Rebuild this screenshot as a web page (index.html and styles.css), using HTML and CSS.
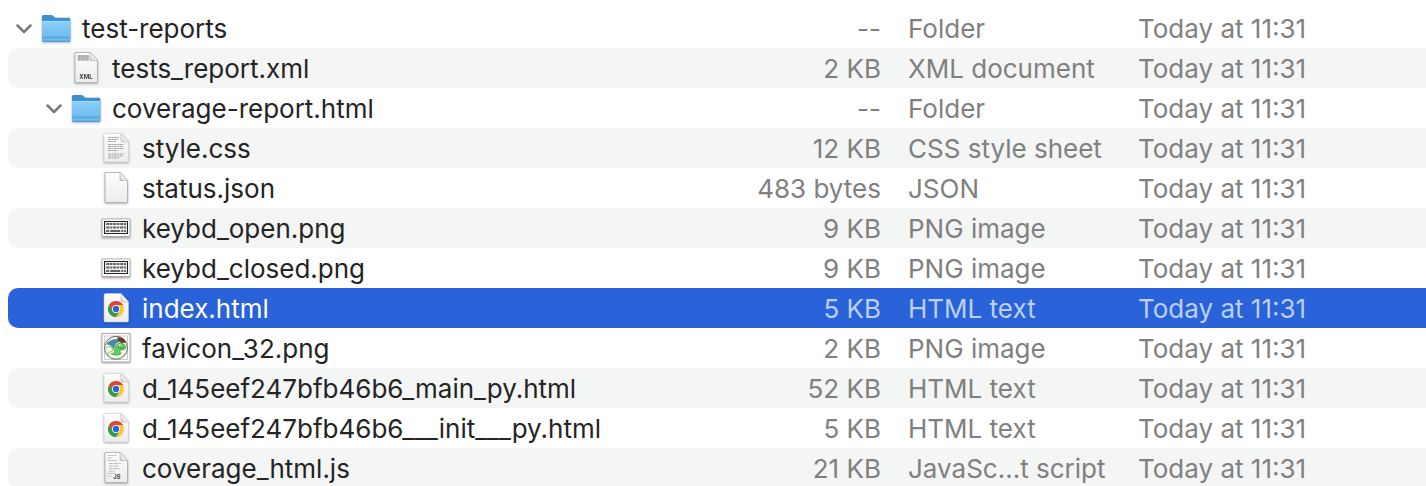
FILE: index.html
```html
<!DOCTYPE html>
<html lang="en">
<head>
<meta charset="utf-8">
<title>test-reports</title>
<link rel="stylesheet" href="styles.css">
</head>
<body>
<svg class="defs" aria-hidden="true">
  <defs>
    <linearGradient id="paper" x1="0" y1="0" x2="0" y2="1"><stop offset="0" stop-color="#fdfdfd"/><stop offset="1" stop-color="#ececec"/></linearGradient>
    <linearGradient id="fold" x1="0" y1="1" x2="1" y2="0"><stop offset="0" stop-color="#c4c4c4"/><stop offset=".5" stop-color="#fff"/></linearGradient>
    <linearGradient id="blue" x1="0" y1="0" x2="0" y2="1"><stop offset="0" stop-color="#8bd0fb"/><stop offset="1" stop-color="#66b5ea"/></linearGradient>
    <symbol id="folder" viewBox="0 0 30 36">
      <path d="M1 31V6.500q0-1.500 1.500-1.500H10q1.200 0 2 .8l1.600 1.400q.6.600 1.600.600H28q1.300 0 1.300 1.400V31z" fill="#3f8fcb"/>
      <path d="M1 11h28.300v19.600q0 1.200-1.200 1.200H2.200Q1 31.800 1 30.600z" fill="url(#blue)"/>
      <path d="M2 11.400h26.500" stroke="#a9dcfb" stroke-width=".8"/>
      <path d="M1.300 27.300h27.700M1.300 31.300h27.700" stroke="#4795cf" stroke-width=".9"/>
    </symbol>
    <symbol id="page" viewBox="0 0 30 36">
      <path d="M4 2.500h15l7.500 8V32.500H4z" fill="url(#paper)" stroke="#b0b0b0" stroke-width=".9"/>
      <path d="M19 2.500l7.500 8H19z" fill="url(#fold)" stroke="#aaa" stroke-width=".6"/>
    </symbol>
    <symbol id="sheet" viewBox="0 0 30 36">
      <path d="M4.500 3.500H20l7.500 8.500v18.500q0 1.500-1.500 1.500H4.500Q3 32 3 30.500V5q0-1.500 1.500-1.500z" fill="url(#paper)" stroke="#d0d0d0" stroke-width=".6"/>
      <path d="M20 3.500l7.500 8.500H21.500Q20 12 20 10.500z" fill="url(#fold)" stroke="#b5b5b5" stroke-width=".6"/>
    </symbol>
    <symbol id="xml" viewBox="0 0 30 36">
      <use href="#page"/>
      <path d="M6.500 5h11.500v5.500H6.500z" fill="#c2c2c2"/>
      <path d="M7 6h11M7 8h11M7 10h11" stroke="#989898" stroke-width=".8" stroke-dasharray="2 .6 1 .5"/>
      <text x="15" y="29" class="tag">XML</text>
    </symbol>
    <symbol id="css" viewBox="0 0 30 36">
      <use href="#sheet"/>
      <path d="M7 7.500h11M7 9.500h10M7 11.500h8M7 14.500h16M7 16.500h15M7 18.500h16M7 20.500h10M7 24h16M7 26h15M7 28h11" stroke="#aaa" stroke-width="1.200" stroke-dasharray="3 .5 2 .4"/>
    </symbol>
    <symbol id="js" viewBox="0 0 30 36">
      <use href="#page"/>
      <path d="M6.500 5.500h9M6.500 8h4M6.500 10.500h9M8 13.500h12M8 16h9M8 18.500h11M8 21h6M6.500 23.500h8M6.500 26h4" stroke="#b4b4b4" stroke-width=".9" stroke-dasharray="3 .6 2 .5"/>
      <text x="16" y="29" class="tag">JS</text>
    </symbol>
    <symbol id="keys" viewBox="0 0 30 36">
      <path d="M1 9h28v17.500H1z" fill="#fff" stroke="#999" stroke-width=".7"/>
      <path d="M1 27h28" stroke="#aaa" stroke-width="1"/>
      <path d="M3.500 11.500h23v12h-23z" fill="#f3f3f3" stroke="#222" stroke-width="1.100"/>
      <path d="M5.200 14h19.800" stroke="#666" stroke-width="1.800" stroke-dasharray="2.800 .7"/>
      <path d="M5.200 17.500h19.800" stroke="#666" stroke-width="1.800" stroke-dasharray="3.400 .7 2 .7"/>
      <path d="M5.200 21h3M9.200 21h10M20.200 21h2M23 21h2" stroke="#666" stroke-width="1.800"/>
    </symbol>
    <symbol id="chrome" viewBox="0 0 30 36">
      <use href="#sheet"/>
      <circle cx="15" cy="19" r="8" fill="#fbc832"/>
      <path d="M8.070 15A8 8 0 0 1 21.930 15H15L11.540 21z" fill="#dc4437"/>
      <path d="M8.070 15L11.540 21 15 23 18.460 21 15 27A8 8 0 0 1 8.070 15z" fill="#2f9b50"/>
      <circle cx="15" cy="19" r="4" fill="#fff"/>
      <circle cx="15" cy="19" r="3.200" fill="#2668dc"/>
    </symbol>
    <symbol id="snake" viewBox="0 0 30 36">
      <path d="M1 3.500h28v28.500H1z" fill="#fff" stroke="#999" stroke-width=".8"/>
      <path d="M3.500 6h23v23.500h-23z" fill="#fff" stroke="#aaa" stroke-width=".6"/>
      <circle cx="15" cy="17.800" r="11.500" fill="#f4f7e6" stroke="#666" stroke-width="1"/>
      <path d="M5 14.500Q8 9 17 9l2 2.500-4 2-2.500 6Q10 14 5 14.500z" fill="#4f87a8"/>
      <path d="M16 7.500q6-1.500 9.500 5l-5 .5-3-2z" fill="#6b3a24"/>
      <path d="M13.500 19.500q1-6 5.500-6.500 5 0 6 4.500-1 2.500-5 2.500-2 .5-1 1.500 2 1.500 0 3-4 1.500-9-.5 4-.5 3.500-4.500z" fill="#5fd060" stroke="#35894a" stroke-width=".6"/>
      <path d="M5 18q4-3 6 0t-2 4-1 4" fill="none" stroke="#9cc58c" stroke-width="1.200"/>
      <path d="M17 17.500q3 1.500 6 0" fill="none" stroke="#23753b" stroke-width=".8"/>
      <circle cx="18.800" cy="15.200" r=".9" fill="#efffd8"/>
    </symbol>
    <symbol id="chevron" viewBox="0 0 18 36">
      <path d="M2.500 15.500l6.500 6.500 6.500-6.500" fill="none" stroke="#7b7b7b" stroke-width="2.500" stroke-linecap="round" stroke-linejoin="round"/>
    </symbol>
  </defs>
</svg>
<table class="files" aria-label="Files">
  <colgroup><col><col class="col-size"><col class="col-kind"><col class="col-date"></colgroup>
  <tbody>
    <tr><td><div class="name"><button class="toggle" aria-label="Collapse test-reports" aria-expanded="true"><svg class="chevron"><use href="#chevron"/></svg></button><svg class="icon"><use href="#folder"/></svg><span>test-reports</span></div></td><td class="size">--</td><td class="kind">Folder</td><td>Today at 11:31</td></tr>
    <tr><td><div class="name level-1 leaf"><svg class="icon"><use href="#xml"/></svg><span>tests_report.xml</span></div></td><td class="size">2 KB</td><td class="kind">XML document</td><td>Today at 11:31</td></tr>
    <tr><td><div class="name level-1"><button class="toggle" aria-label="Collapse coverage-report.html" aria-expanded="true"><svg class="chevron"><use href="#chevron"/></svg></button><svg class="icon"><use href="#folder"/></svg><span>coverage-report.html</span></div></td><td class="size">--</td><td class="kind">Folder</td><td>Today at 11:31</td></tr>
    <tr><td><div class="name level-2 leaf"><svg class="icon"><use href="#css"/></svg><span>style.css</span></div></td><td class="size">12 KB</td><td class="kind">CSS style sheet</td><td>Today at 11:31</td></tr>
    <tr><td><div class="name level-2 leaf"><svg class="icon"><use href="#page"/></svg><span>status.json</span></div></td><td class="size">483 bytes</td><td class="kind">JSON</td><td>Today at 11:31</td></tr>
    <tr><td><div class="name level-2 leaf"><svg class="icon"><use href="#keys"/></svg><span>keybd_open.png</span></div></td><td class="size">9 KB</td><td class="kind">PNG image</td><td>Today at 11:31</td></tr>
    <tr><td><div class="name level-2 leaf"><svg class="icon"><use href="#keys"/></svg><span>keybd_closed.png</span></div></td><td class="size">9 KB</td><td class="kind">PNG image</td><td>Today at 11:31</td></tr>
    <tr class="selected" aria-selected="true"><td><div class="name level-2 leaf"><svg class="icon"><use href="#chrome"/></svg><span>index.html</span></div></td><td class="size">5 KB</td><td class="kind">HTML text</td><td>Today at 11:31</td></tr>
    <tr><td><div class="name level-2 leaf"><svg class="icon"><use href="#snake"/></svg><span>favicon_32.png</span></div></td><td class="size">2 KB</td><td class="kind">PNG image</td><td>Today at 11:31</td></tr>
    <tr><td><div class="name level-2 leaf"><svg class="icon"><use href="#chrome"/></svg><span>d_145eef247bfb46b6_main_py.html</span></div></td><td class="size">52 KB</td><td class="kind">HTML text</td><td>Today at 11:31</td></tr>
    <tr><td><div class="name level-2 leaf"><svg class="icon"><use href="#chrome"/></svg><span>d_145eef247bfb46b6___init___py.html</span></div></td><td class="size">5 KB</td><td class="kind">HTML text</td><td>Today at 11:31</td></tr>
    <tr><td><div class="name level-2 leaf"><svg class="icon"><use href="#js"/></svg><span>coverage_html.js</span></div></td><td class="size">21 KB</td><td class="kind">JavaSc...t script</td><td>Today at 11:31</td></tr>
  </tbody>
</table>
</body>
</html>
```
FILE: styles.css
```css
html {
  overflow: hidden;
}

body {
  margin: 0;
  padding: 8px 0 0 8px;
  background: #fff;
  color: #7f8080;
  font-family: Inter, "Liberation Sans", sans-serif;
  font-size: 26px;
  line-height: 38px;
}

.defs {
  position: absolute;
  width: 0;
  height: 0;
}

.files {
  width: 100%;
  table-layout: fixed;
  border-collapse: separate;
  border-spacing: 0;
}

.col-size {
  width: 160px;
}

.col-kind {
  width: 256px;
}

.col-date {
  width: 288px;
}

td {
  box-sizing: border-box;
  height: 40px;
  padding: 2px 0 0;
  white-space: nowrap;
}

tr:nth-child(even) td {
  background: #f4f5f5;
}

td:first-child {
  padding: 0;
  border-radius: 10px 0 0 10px;
}

td.size {
  padding-right: 1px;
  text-align: right;
}

td.kind {
  padding-left: 26px;
}

.name {
  display: flex;
  align-items: center;
  height: 40px;
  padding-left: 7px;
  color: #242424;
}

.name span {
  padding-top: 2px;
}

.level-1 {
  padding-left: 37px;
}

.level-2 {
  padding-left: 67px;
}

.leaf::before {
  content: "";
  width: 18px;
}

.toggle {
  display: flex;
  padding: 0;
  border: 0;
  background: none;
}

.chevron {
  width: 18px;
  height: 36px;
}

.icon {
  width: 30px;
  height: 36px;
  margin: 0 11px 0 8px;
  filter: drop-shadow(0 1px 1px rgb(0 0 0 / 30%));
}

.tag {
  font: 700 6px Inter, sans-serif;
  text-anchor: middle;
  fill: #444;
}

tr.selected td {
  background: #2962d9;
  color: #bccff4;
}

tr.selected .name {
  color: #fff;
}
```
